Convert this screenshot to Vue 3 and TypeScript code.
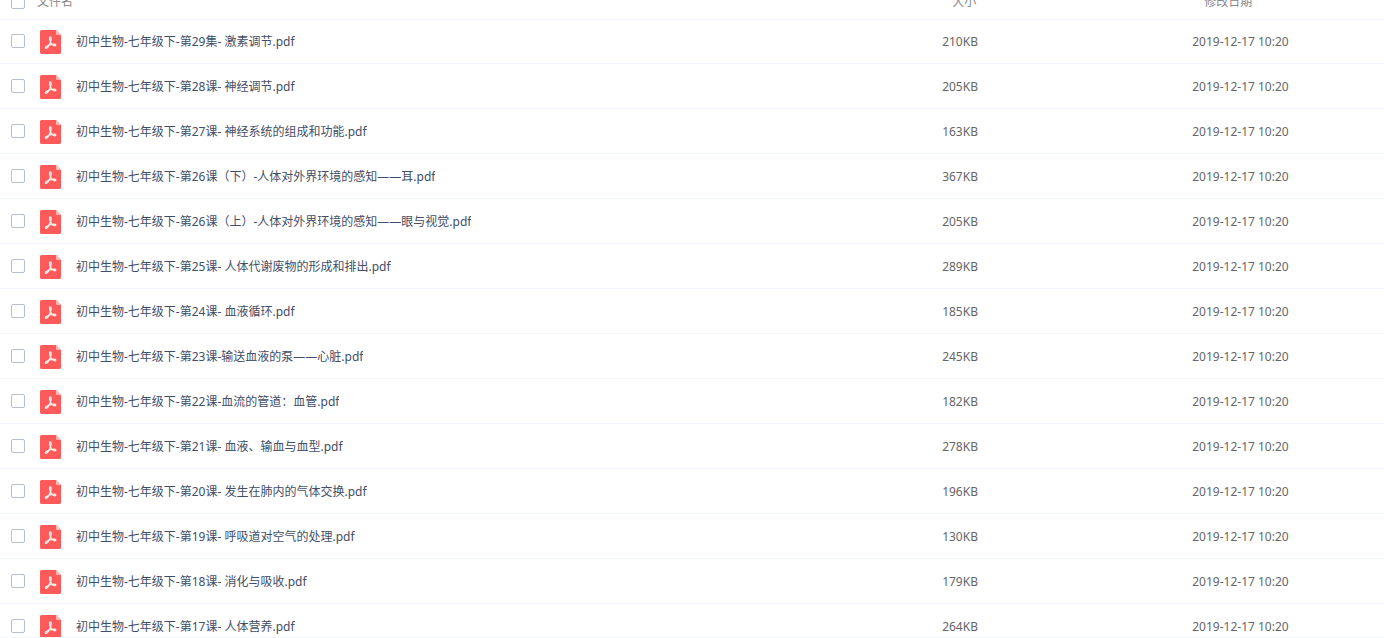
<script setup lang="ts">
import { computed, ref } from 'vue'

interface FileRow {
  name: string
  size: string
  date: string
}

const date = '2019-12-17 10:20'
const entries: [string, string][] = [
  ['初中生物-七年级下-第29集- 激素调节.pdf', '210KB'],
  ['初中生物-七年级下-第28课- 神经调节.pdf', '205KB'],
  ['初中生物-七年级下-第27课- 神经系统的组成和功能.pdf', '163KB'],
  ['初中生物-七年级下-第26课（下）-人体对外界环境的感知——耳.pdf', '367KB'],
  ['初中生物-七年级下-第26课（上）-人体对外界环境的感知——眼与视觉.pdf', '205KB'],
  ['初中生物-七年级下-第25课- 人体代谢废物的形成和排出.pdf', '289KB'],
  ['初中生物-七年级下-第24课- 血液循环.pdf', '185KB'],
  ['初中生物-七年级下-第23课-输送血液的泵——心脏.pdf', '245KB'],
  ['初中生物-七年级下-第22课-血流的管道：血管.pdf', '182KB'],
  ['初中生物-七年级下-第21课- 血液、输血与血型.pdf', '278KB'],
  ['初中生物-七年级下-第20课- 发生在肺内的气体交换.pdf', '196KB'],
  ['初中生物-七年级下-第19课- 呼吸道对空气的处理.pdf', '130KB'],
  ['初中生物-七年级下-第18课- 消化与吸收.pdf', '179KB'],
  ['初中生物-七年级下-第17课- 人体营养.pdf', '264KB'],
]
const files: FileRow[] = entries.map(([name, size]) => ({ name, size, date }))

const selected = ref<string[]>([])
const allSelected = computed({
  get: () => selected.value.length === files.length,
  set: (on: boolean) => {
    selected.value = on ? files.map((f) => f.name) : []
  },
})
</script>

<template>
  <main class="list">
    <table class="files">
      <colgroup>
        <col class="col-check" />
        <col />
        <col class="col-size" />
        <col class="col-date" />
      </colgroup>
      <thead>
        <tr>
          <th class="check"><input id="all" v-model="allSelected" type="checkbox" aria-label="文件名" /></th>
          <th class="name-head"><label for="all">文件名</label></th>
          <th class="size-head">大小</th>
          <th class="date-head">修改日期</th>
        </tr>
      </thead>
      <tbody>
        <tr v-for="file in files" :key="file.name">
          <td class="check">
            <input v-model="selected" type="checkbox" :value="file.name" :aria-label="file.name" />
          </td>
          <td>
            <div class="file">
              <svg class="icon" viewBox="0 0 21 24" aria-hidden="true">
                <path d="M1.500 0H16l5 5v17.500a1.500 1.500 0 0 1-1.500 1.500h-18A1.500 1.500 0 0 1 0 22.500v-21A1.500 1.500 0 0 1 1.500 0z" fill="#ff5a5a" />
                <path d="M16 0l5 5h-4a1 1 0 0 1-1-1z" fill="#ffb8b8" />
                <path
                  d="M10 6.900C11.400 6.700 11.200 9 10.800 10.800C10 13.600 8.200 17 6.600 18.200C5.500 18.900 4.900 17.700 5.900 16.800C7.900 15.300 11.300 14.200 13.800 14.100C16.300 14.100 16.300 16 14.700 15.800C12.500 15.500 10.600 12.800 9.900 10.200C9.400 8.400 9.400 7.200 10 6.900z"
                  fill="none"
                  stroke="#ffeeee"
                  stroke-width="1.300"
                  stroke-linejoin="round"
                />
              </svg>
              <a class="name" href="#">{{ file.name }}</a>
            </div>
          </td>
          <td class="size">{{ file.size }}</td>
          <td class="date">{{ file.date }}</td>
        </tr>
      </tbody>
    </table>
  </main>
</template>

<style>
body {
  margin: 0;
  background: #fff;
}
</style>

<style scoped>
.list {
  box-sizing: border-box;
  height: 100vh;
  overflow: hidden;
  border-bottom: 1px solid #f2f6fd;
  font-family: "Noto Sans", "Noto Sans CJK SC", sans-serif;
  font-size: 12px;
  line-height: 18px;
  color: #666;
}
.files {
  width: 100%;
  margin-top: -15px;
  table-layout: fixed;
  border-collapse: separate;
  border-spacing: 0;
}
.col-check {
  width: 36px;
}
.col-size {
  width: 18%;
}
.col-date {
  width: 14%;
}
th,
td {
  box-sizing: border-box;
  padding: 0;
  text-align: left;
  vertical-align: middle;
  white-space: nowrap;
}
th {
  height: 34px;
  padding-bottom: 1px;
  font-weight: 400;
  color: #888;
}
td {
  height: 45px;
  padding-top: 2px;
  border-bottom: 1px solid #f2f6fd;
}
tbody tr:first-child td {
  padding-top: 0;
  border-top: 1px solid #f2f6fd;
}
th.check,
td.check {
  padding: 0 0 0 11px;
}
tbody tr:first-child td.check {
  padding-bottom: 1px;
}
.check input {
  display: block;
  box-sizing: border-box;
  width: 14px;
  height: 14px;
  margin: 0;
  appearance: none;
  border: 1px solid #b4c0cf;
  border-radius: 2px;
  background: #fff;
}
.check input:checked {
  background: #3b8cff;
  border-color: #3b8cff;
}
.name-head {
  padding-left: 1px;
}
.size-head {
  padding-left: 11px;
}
.date-head {
  padding-left: 14px;
}
.file {
  display: flex;
  align-items: center;
  gap: 15px;
  padding-left: 4px;
}
.icon {
  flex: none;
  width: 21px;
  height: 24px;
}
.name {
  overflow: hidden;
  text-overflow: ellipsis;
  color: #424e67;
  text-decoration: none;
}
.size {
  padding-left: 1px;
}
.date {
  padding-left: 2px;
}
</style>
